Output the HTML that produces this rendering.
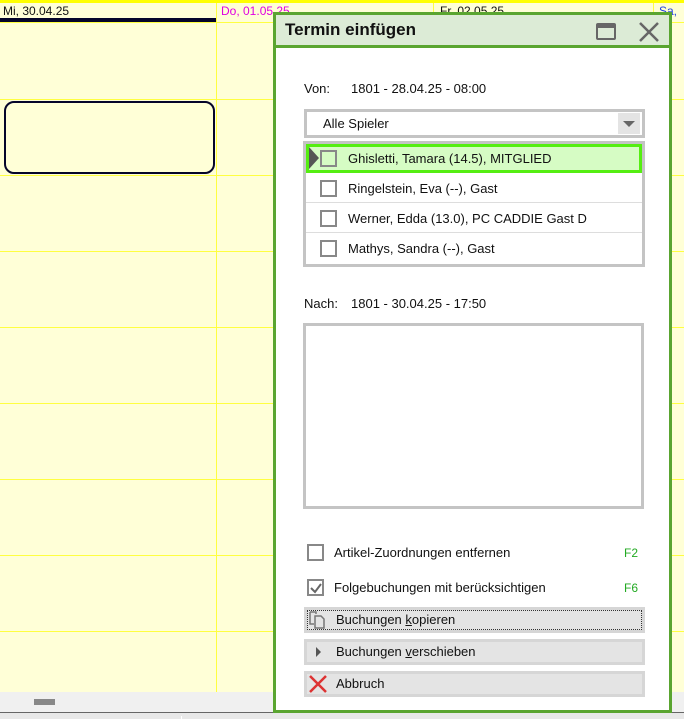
<!DOCTYPE html>
<html><head><meta charset="utf-8"><style>
*{margin:0;padding:0;box-sizing:border-box}
body{width:684px;height:719px;overflow:hidden;background:#ffffd7;font-family:"Liberation Sans","DejaVu Sans",sans-serif;font-size:12px;color:#111;position:relative}
.a{position:absolute}
.hl{position:absolute;left:0;width:684px;height:1px;background:#ffff40}
.vl{position:absolute;top:3px;width:1px;height:689px;background:#ffff40}
.cb{position:absolute;width:17px;height:17px;border:2px solid #888;background:#fff}
.btn{position:absolute;left:304px;width:341px;height:26px;background:#d6d6d6;padding:3px}
.btn div{width:100%;height:100%;background:#e4e4e4;padding-left:29px;line-height:19px;font-size:13px}
.row{position:absolute;left:306px;width:336px;height:30px;border-bottom:1px solid #ddd;font-size:13px;line-height:30px}
</style></head><body>
<div class="a" style="left:0;top:0;width:684px;height:3px;background:#ffff00"></div>
<div class="hl" style="top:22px"></div>
<div class="hl" style="top:99px"></div>
<div class="hl" style="top:175px"></div>
<div class="hl" style="top:251px"></div>
<div class="hl" style="top:327px"></div>
<div class="hl" style="top:403px"></div>
<div class="hl" style="top:479px"></div>
<div class="hl" style="top:555px"></div>
<div class="hl" style="top:631px"></div>
<div class="vl" style="left:216px"></div>
<div class="vl" style="left:433px"></div>
<div class="vl" style="left:653px"></div>
<div class="a" style="left:3px;top:4px;font-size:12px">Mi, 30.04.25</div>
<div class="a" style="left:221px;top:4px;color:#e000e0">Do, 01.05.25</div>
<div class="a" style="left:440px;top:4px">Fr, 02.05.25</div>
<div class="a" style="left:659px;top:4px;color:#2040e0">Sa, 03</div>
<div class="a" style="left:0;top:18px;width:216px;height:4px;background:#05052a"></div>
<div class="a" style="left:4px;top:101px;width:211px;height:73px;border:2px solid #05052a;border-radius:10px"></div>
<div class="a" style="left:0;top:692px;width:684px;height:20px;background:#f0f0f0"></div>
<div class="a" style="left:34px;top:699px;width:21px;height:6px;background:#888"></div>
<div class="a" style="left:0;top:712px;width:684px;height:1px;background:#666"></div>
<div class="a" style="left:0;top:713px;width:684px;height:6px;background:#e8e8e8"></div>
<div class="a" style="left:181px;top:716px;width:1px;height:3px;background:#fff"></div>

<div class="a" style="left:273px;top:12px;width:399px;height:701px;background:#fff;border:3px solid #5aa530"></div>
<div class="a" style="left:276px;top:15px;width:393px;height:33px;background:#dcebd6;border-bottom:3px solid #5aa530"></div>
<div class="a" style="left:285px;top:20px;font-size:17px;font-weight:bold;color:#111">Termin einfügen</div>
<div class="a" style="left:596px;top:23px;width:20px;height:17px;border:2px solid #666;border-top-width:5px;border-radius:2px"></div>
<svg class="a" style="left:638px;top:22px" width="22" height="20"><path d="M2 1L20 19M20 1L2 19" stroke="#666" stroke-width="2.5"/></svg>

<div class="a" style="left:304px;top:81px;font-size:13px">Von:</div>
<div class="a" style="left:351px;top:81px;font-size:13px">1801 - 28.04.25 - 08:00</div>
<div class="a" style="left:304px;top:109px;width:341px;height:29px;border:3px solid #c4c4c4;background:#fff"></div>
<div class="a" style="left:323px;top:116px;font-size:13px">Alle Spieler</div>
<div class="a" style="left:618px;top:113px;width:22px;height:21px;background:#e4e4e4"></div>
<div class="a" style="left:623px;top:121px;width:0;height:0;border-left:6px solid transparent;border-right:6px solid transparent;border-top:6px solid #666"></div>

<div class="a" style="left:303px;top:141px;width:342px;height:126px;border:3px solid #c4c4c4;background:#fff"></div>
<div class="a" style="left:306px;top:144px;width:336px;height:29px;background:#d6fcc4;border:3px solid #55ee11"></div>
<div class="a" style="left:309px;top:147px;width:0;height:0;border-top:11px solid transparent;border-bottom:11px solid transparent;border-left:10px solid #555"></div>
<div class="cb" style="left:320px;top:150px;background:transparent"></div>
<div class="a" style="left:348px;top:151px;font-size:13px">Ghisletti, Tamara (14.5), MITGLIED</div>
<div class="row" style="top:173px"></div><div class="cb" style="left:320px;top:180px"></div><div class="a" style="left:348px;top:181px;font-size:13px">Ringelstein, Eva (--), Gast</div>
<div class="row" style="top:203px"></div><div class="cb" style="left:320px;top:210px"></div><div class="a" style="left:348px;top:211px;font-size:13px">Werner, Edda (13.0), PC CADDIE Gast D</div>
<div class="cb" style="left:320px;top:240px"></div><div class="a" style="left:348px;top:241px;font-size:13px">Mathys, Sandra (--), Gast</div>

<div class="a" style="left:304px;top:296px;font-size:13px">Nach:</div>
<div class="a" style="left:351px;top:296px;font-size:13px">1801 - 30.04.25 - 17:50</div>
<div class="a" style="left:303px;top:323px;width:341px;height:186px;border:3px solid #c4c4c4;background:#fff"></div>

<div class="cb" style="left:307px;top:544px"></div>
<div class="a" style="left:334px;top:545px;font-size:13px">Artikel-Zuordnungen entfernen</div>
<div class="a" style="left:624px;top:546px;font-size:12px;color:#22aa22">F2</div>
<div class="cb" style="left:307px;top:579px"></div>
<svg class="a" style="left:309px;top:581px" width="14" height="14"><path d="M2 7L6 11L12 3" stroke="#666" stroke-width="2" fill="none"/></svg>
<div class="a" style="left:334px;top:580px;font-size:13px">Folgebuchungen mit berücksichtigen</div>
<div class="a" style="left:624px;top:581px;font-size:12px;color:#22aa22">F6</div>

<div class="btn" style="top:607px"><div style="outline:1px dotted #333;outline-offset:-1px">Buchungen <u>k</u>opieren</div></div>
<svg class="a" style="left:307px;top:610px" width="22" height="20"><path d="M3 2H9V4M3 2V14H7" stroke="#777" fill="none" stroke-width="1.5"/><path d="M8 6H14L17 9V18H8Z" stroke="#777" fill="none" stroke-width="1.5"/></svg>
<div class="btn" style="top:639px"><div>Buchungen <u>v</u>erschieben</div></div>
<div class="a" style="left:316px;top:647px;width:0;height:0;border-top:5px solid transparent;border-bottom:5px solid transparent;border-left:5px solid #555"></div>
<div class="btn" style="top:671px"><div>Abbruch</div></div>
<svg class="a" style="left:308px;top:674px" width="20" height="20"><path d="M2 2L18 18M18 2L2 18" stroke="#dd3333" stroke-width="2.5"/></svg>
</body></html>
